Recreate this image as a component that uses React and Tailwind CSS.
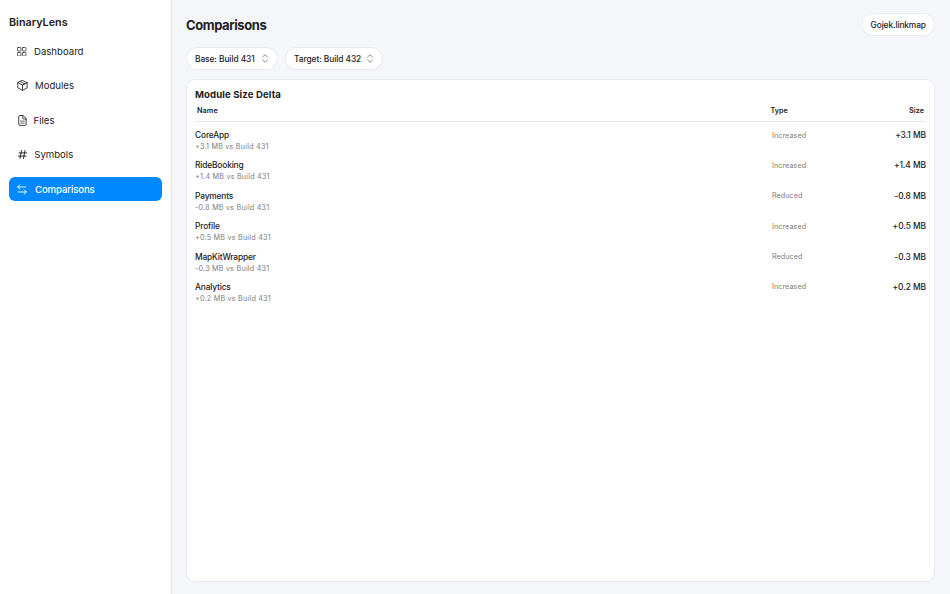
import React, { useState } from "react";

const modules = [
  { name: "CoreApp", delta: "+3.1 MB", type: "Increased" },
  { name: "RideBooking", delta: "+1.4 MB", type: "Increased" },
  { name: "Payments", delta: "-0.8 MB", type: "Reduced" },
  { name: "Profile", delta: "+0.5 MB", type: "Increased" },
  { name: "MapKitWrapper", delta: "-0.3 MB", type: "Reduced" },
  { name: "Analytics", delta: "+0.2 MB", type: "Increased" },
];

const iconProps = {
  fill: "none",
  stroke: "currentColor",
  strokeLinecap: "round",
  strokeLinejoin: "round",
};

const DashboardIcon = () => (
  <svg width="9.4" height="9.4" viewBox="0 0 9 9" strokeWidth="0.7" {...iconProps}>
    <rect x="0.4" y="0.4" width="3.4" height="3.4" rx="0.7" />
    <rect x="5.2" y="0.4" width="3.4" height="3.4" rx="0.7" />
    <rect x="0.4" y="5.2" width="3.4" height="3.4" rx="0.7" />
    <rect x="5.2" y="5.2" width="3.4" height="3.4" rx="0.7" />
  </svg>
);

const ModulesIcon = () => (
  <svg width="11" height="11" viewBox="0 0 11 11" strokeWidth="0.85" {...iconProps}>
    <path d="M5.5 0.5 10.2 2.7v5.1L5.5 10.4 0.8 7.8V2.7z" />
    <path d="M0.8 2.7 5.5 5 10.2 2.7M5.5 5v5.4M3.2 1.6l4.7 2.3" />
  </svg>
);

const FilesIcon = () => (
  <svg width="9" height="11" viewBox="0 0 9 11" strokeWidth="0.85" {...iconProps}>
    <path d="M4.8 0.5H2A1.3 1.3 0 0 0 0.7 1.8v7.3A1.3 1.3 0 0 0 2 10.4h4.9a1.3 1.3 0 0 0 1.3-1.3V4z" />
    <path d="M4.8 0.5V3A1 1 0 0 0 5.8 4h2.4" />
    <path d="M2.6 6.1h3.7M2.6 8.1h3.7" strokeWidth="0.7" />
  </svg>
);

const SymbolsIcon = () => (
  <svg width="9" height="9" viewBox="0 0 9 9" strokeWidth="0.95" {...iconProps}>
    <path d="M3.5 0.5 2 8.5M7 0.5 5.5 8.5M1 2.9h7.5M0.5 6.1H8" />
  </svg>
);

const ComparisonsIcon = () => (
  <svg width="10" height="11" viewBox="0 0 10 11" strokeWidth="0.9" {...iconProps}>
    <path d="M8.8 3H0.7M2.9 0.8 0.7 3l2.2 2.2" />
    <path d="M1.2 8h8.1M7.1 5.8 9.3 8l-2.2 2.2" />
  </svg>
);

const Chevrons = () => (
  <svg width="6" height="9" viewBox="0 0 6 9" strokeWidth="0.8" className="text-[#6b6b6b]" {...iconProps}>
    <path d="M0.6 3 3 0.7 5.4 3M0.6 6 3 8.3 5.4 6" />
  </svg>
);

const navItems = [
  { label: "Dashboard", icon: <DashboardIcon />, gap: "ml-[6.5px]" },
  { label: "Modules", icon: <ModulesIcon />, gap: "ml-[7.5px]" },
  { label: "Files", icon: <FilesIcon />, gap: "ml-[6px]" },
  { label: "Symbols", icon: <SymbolsIcon />, gap: "ml-[6.8px]" },
  { label: "Comparisons", icon: <ComparisonsIcon />, gap: "ml-[7.5px]" },
];

function Sidebar({ active, onSelect }) {
  return (
    <aside className="w-[172px] shrink-0 bg-white border-r border-[#e2e3e8] px-[9px] pt-4">
      <h1 className="text-[10.8px] leading-[14px] font-semibold">BinaryLens</h1>
      <nav className="mt-[9.3px] flex flex-col gap-[10.3px]">
        {navItems.map((item) => (
          <button
            key={item.label}
            onClick={() => onSelect(item.label)}
            className={`flex h-[24.2px] w-full items-center rounded-[6px] pl-[7.5px] text-left text-[9.6px] leading-[14px] ${
              active === item.label ? "bg-[#0088ff] text-white font-medium tracking-[-0.12px]" : ""
            }`}
          >
            <span className="flex w-[11px] justify-center">{item.icon}</span>
            <span className={`pt-[1.2px] ${item.gap}`}>{item.label}</span>
          </button>
        ))}
      </nav>
    </aside>
  );
}

function BuildPicker({ label, width }) {
  return (
    <button
      className={`flex h-[23px] items-center justify-between rounded-full border border-[#e9eaee] bg-white pl-2 pr-[9px] text-[8.4px] leading-[12px] font-medium tracking-[-0.08px] ${width}`}
    >
      <span className="pt-px">{label}</span>
      <Chevrons />
    </button>
  );
}

function App() {
  const [active, setActive] = useState("Comparisons");

  return (
    <div className="flex h-screen overflow-hidden bg-[#f5f6fa] text-[#222222] font-['Inter',sans-serif]">
      <Sidebar active={active} onSelect={setActive} />
      <main className="flex min-w-0 flex-1 flex-col pl-[14px] pr-[14.6px] pt-[13px] pb-3">
        <header className="flex h-[23px] items-center justify-between">
          <h2 className="pt-px text-[13px] leading-[22px] font-bold tracking-[-0.42px]">Comparisons</h2>
          <span className="flex h-[23px] w-[74px] items-center justify-center rounded-full border border-[#e9eaee] bg-white text-[8.4px] leading-[12px] font-medium tracking-[-0.12px]">
            <span className="pt-px pr-[0.4px]">Gojek.linkmap</span>
          </span>
        </header>
        <div className="mt-[11px] flex gap-[7px]">
          <BuildPicker label="Base: Build 431" width="w-[92px]" />
          <BuildPicker label="Target: Build 432" width="w-[98px]" />
        </div>
        <section className="mt-[9px] min-h-0 flex-1 rounded-[9px] border border-[#e9eaee] bg-white pl-2 pr-[8.4px] pt-2">
          <h3 className="text-[9.6px] leading-[13px] font-bold tracking-[0.11px]">Module Size Delta</h3>
          <div className="flex h-[21px] items-center border-b border-[#e4e4e6] pl-[2px] pr-[2px] text-[7.2px] font-semibold">
            <span className="flex-1 tracking-[0.12px]">Name</span>
            <span className="w-[119.5px]">Type</span>
            <span className="w-[34px] text-right tracking-[0.08px]">Size</span>
          </div>
          <div className="pt-[7px]">
            {modules.map((m) => (
              <div key={m.name} className="flex h-[30.4px] items-start">
                <div className="flex-1">
                  <p className="text-[8.4px] leading-[12px] font-medium tracking-[-0.16px]">{m.name}</p>
                  <p className="text-[7.2px] leading-[11px] tracking-[0.22px] text-[#7c7c7c]">{m.delta} vs Build 431</p>
                </div>
                <span className="w-[90px] pt-[0.5px] text-[7.2px] leading-[12px] tracking-[0.06px] text-[#7c7c7c]">{m.type}</span>
                <span className="w-[64px] text-right text-[8.4px] leading-[12px] font-medium tracking-[-0.05px]">{m.delta}</span>
              </div>
            ))}
          </div>
        </section>
      </main>
    </div>
  );
}

export default App;
